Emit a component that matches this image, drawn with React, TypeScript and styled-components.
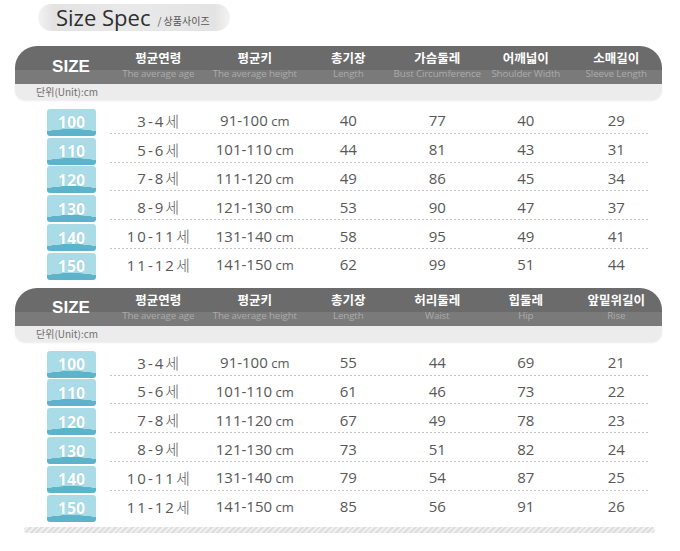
import styled, { createGlobalStyle } from 'styled-components';

const GlobalStyle = createGlobalStyle`
    body {
        margin: 0;
        background: #ffffff;
        font-family: 'Open Sans', 'Noto Sans CJK KR', sans-serif;
    }
`;

interface Column {
    ko: string;
    en: string;
}

interface SpecRow {
    size: number;
    age: string;
    height: string;
    values: number[];
}

const topColumns: Column[] = [
    { ko: '평균연령', en: 'The average age' },
    { ko: '평균키', en: 'The average height' },
    { ko: '총기장', en: 'Length' },
    { ko: '가슴둘레', en: 'Bust Circumference' },
    { ko: '어깨넓이', en: 'Shoulder Width' },
    { ko: '소매길이', en: 'Sleeve Length' },
];

const bottomColumns: Column[] = [
    { ko: '평균연령', en: 'The average age' },
    { ko: '평균키', en: 'The average height' },
    { ko: '총기장', en: 'Length' },
    { ko: '허리둘레', en: 'Waist' },
    { ko: '힙둘레', en: 'Hip' },
    { ko: '앞밑위길이', en: 'Rise' },
];

const base = [
    { size: 100, age: '3-4', height: '91-100' },
    { size: 110, age: '5-6', height: '101-110' },
    { size: 120, age: '7-8', height: '111-120' },
    { size: 130, age: '8-9', height: '121-130' },
    { size: 140, age: '10-11', height: '131-140' },
    { size: 150, age: '11-12', height: '141-150' },
];

const topValues = [
    [40, 77, 40, 29],
    [44, 81, 43, 31],
    [49, 86, 45, 34],
    [53, 90, 47, 37],
    [58, 95, 49, 41],
    [62, 99, 51, 44],
];

const bottomValues = [
    [55, 44, 69, 21],
    [61, 46, 73, 22],
    [67, 49, 78, 23],
    [73, 51, 82, 24],
    [79, 54, 87, 25],
    [85, 56, 91, 26],
];

const topRows: SpecRow[] = base.map((b, i) => ({ ...b, values: topValues[i] }));
const bottomRows: SpecRow[] = base.map((b, i) => ({ ...b, values: bottomValues[i] }));

const SpecTable = ({ columns, rows }: { columns: Column[]; rows: SpecRow[] }) => (
    <Table>
        <HeaderBar>
            <SizeHead>SIZE</SizeHead>
            {columns.map((col) => (
                <HeadCell key={col.ko}>
                    <HeadKo>{col.ko}</HeadKo>
                    <HeadEn>{col.en}</HeadEn>
                </HeadCell>
            ))}
        </HeaderBar>
        <UnitBar>단위(Unit):cm</UnitBar>
        <Body>
            {rows.map((row) => (
                <Row key={row.size}>
                    <BadgeCell>
                        <Badge>{row.size}</Badge>
                    </BadgeCell>
                    <Cells>
                        <Cell>
                            <Age>
                                {row.age}
                                <Unit>세</Unit>
                            </Age>
                        </Cell>
                        <Cell>
                            {row.height}
                            <Cm> cm</Cm>
                        </Cell>
                        {row.values.map((v, i) => (
                            <Cell key={i}>{v}</Cell>
                        ))}
                    </Cells>
                </Row>
            ))}
        </Body>
    </Table>
);

const App = () => (
    <>
        <GlobalStyle />
        <Page>
            <TitlePill>
                <TitleMain>Size Spec</TitleMain>
                <TitleSub>/ 상품사이즈</TitleSub>
            </TitlePill>
            <SpecTable columns={topColumns} rows={topRows} />
            <SpecTable columns={bottomColumns} rows={bottomRows} />
            <StripeBar />
        </Page>
    </>
);

const Page = styled.div`
    width: 680px;
    height: 551px;
    padding-top: 4px;
    box-sizing: border-box;
    overflow: hidden;
`;

const TitlePill = styled.div`
    margin-left: 38px;
    width: 192px;
    height: 27px;
    box-sizing: border-box;
    padding-left: 18px;
    display: flex;
    align-items: center;
    gap: 7px;
    border-radius: 14px;
    background: linear-gradient(
        to right,
        rgba(226, 226, 226, 0.4) 0%,
        #e3e3e3 8%,
        #e9e9e9 50%,
        #e3e3e3 92%,
        rgba(226, 226, 226, 0.4) 100%
    );
`;

const TitleMain = styled.span`
    font-family: 'Open Sans', sans-serif;
    font-size: 22px;
    color: #2e2e2e;
    line-height: 1;
    margin-top: -1px;
`;

const TitleSub = styled.span`
    font-family: 'Noto Sans CJK KR', sans-serif;
    font-size: 10px;
    color: #555555;
    margin-top: 5px;
`;

const Table = styled.div`
    margin-left: 15px;
    width: 647px;
    margin-top: 15px;
    & + & {
        margin-top: 7px;
    }
`;

const gridCols = '95px 96.5px 96.5px 90.5px 87.5px 89.5px 91.5px';

const HeaderBar = styled.div`
    display: grid;
    grid-template-columns: ${gridCols};
    height: 38px;
    border-radius: 22px 22px 0 0;
    background: linear-gradient(#6b6b6b 0 62%, #7a7a7a 62% 100%);
    color: #ffffff;
`;

const SizeHead = styled.div`
    padding-left: 17px;
    display: flex;
    align-items: center;
    justify-content: center;
    font-family: 'Liberation Sans', Arial, sans-serif;
    font-weight: 700;
    font-size: 17px;
    padding-top: 3px;
`;

const HeadCell = styled.div`
    display: flex;
    flex-direction: column;
    align-items: center;
    white-space: nowrap;
    padding-top: 3px;
`;

const HeadKo = styled.div`
    font-family: 'Noto Sans CJK KR', sans-serif;
    font-weight: 700;
    font-size: 12.5px;
    line-height: 17px;
`;

const HeadEn = styled.div`
    font-family: 'Open Sans', sans-serif;
    font-size: 9.8px;
    letter-spacing: -0.15px;
    line-height: 16px;
    color: #ababab;
`;

const UnitBar = styled.div`
    height: 16px;
    padding-left: 21px;
    background: #ececec;
    border-radius: 0 0 10px 10px;
    box-shadow: 0 1px 2px rgba(0, 0, 0, 0.08);
    font-family: 'Noto Sans CJK KR', sans-serif;
    font-size: 10px;
    line-height: 16px;
    color: #6f6f6f;
`;

const Body = styled.div`
    padding-top: 8px;
`;

const Row = styled.div`
    display: flex;
    height: 28.8px;
`;

const BadgeCell = styled.div`
    width: 95px;
    padding-left: 32px;
    box-sizing: border-box;
    display: flex;
    align-items: center;
`;

const Badge = styled.div`
    width: 49px;
    height: 27px;
    border-radius: 3px;
    background:
        radial-gradient(34px 7px at 50% 100%, #5db4ca 96%, rgba(93, 180, 202, 0) 100%),
        #a9dce7;
    color: #ffffff;
    font-family: 'Open Sans', sans-serif;
    font-weight: 700;
    font-size: 16px;
    display: flex;
    align-items: center;
    justify-content: center;
    text-shadow: 0 0 1px rgba(60, 140, 160, 0.4);
`;

const Cells = styled.div`
    flex: 1;
    display: grid;
    grid-template-columns: 96.5px 96.5px 90.5px 87.5px 89.5px 91.5px;
    align-items: center;
    padding-bottom: 4px;
    background-image: repeating-linear-gradient(to right, #c4c4c4 0 2px, transparent 2px 4px);
    background-size: calc(100% - 14px) 1px;
    background-repeat: no-repeat;
    background-position: left calc(100% - 3px);
    ${Row}:last-child & {
        background-image: none;
    }
`;

const Cell = styled.div`
    text-align: center;
    white-space: nowrap;
    font-family: 'Open Sans', 'Noto Sans CJK KR', sans-serif;
    font-size: 15px;
    color: #585858;
`;

const Age = styled.span`
    letter-spacing: 2px;
`;

const Unit = styled.span`
    font-family: 'Noto Sans CJK KR', sans-serif;
    font-weight: 300;
    letter-spacing: 0;
`;

const Cm = styled.span`
    font-size: 13px;
`;

const StripeBar = styled.div`
    margin: 4px 0 0 24px;
    width: 631px;
    height: 6px;
    border-radius: 3px;
    background: repeating-linear-gradient(135deg, #dedede 0 2px, #f0f0f0 2px 4px);
`;

export default App;
